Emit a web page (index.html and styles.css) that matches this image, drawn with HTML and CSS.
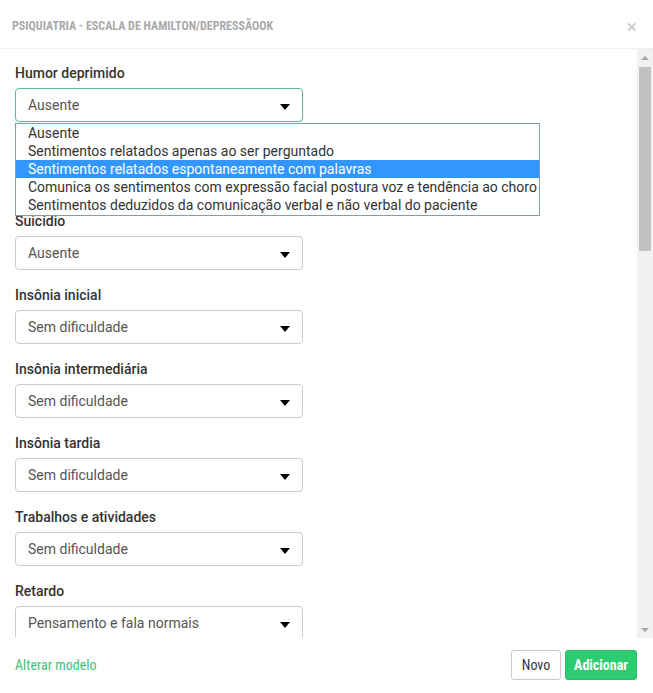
FILE: index.html
```html
<!DOCTYPE html>
<html lang="pt">
<head>
<meta charset="utf-8">
<link rel="stylesheet" href="styles.css">
</head>
<body>
<div class="modal">
  <div class="modal-header">
    <span class="title">PSIQUIATRIA - ESCALA DE HAMILTON/DEPRESSÃOOK</span>
    <span class="close">×</span>
  </div>
  <div class="modal-middle">
    <div class="modal-body">
      <div class="group">
        <div class="label">Humor deprimido</div>
        <div class="select focused"><span>Ausente</span><i class="caret"></i></div>
        <ul class="dropdown">
          <li>Ausente</li>
          <li>Sentimentos relatados apenas ao ser perguntado</li>
          <li class="active">Sentimentos relatados espontaneamente com palavras</li>
          <li>Comunica os sentimentos com expressão facial postura voz e tendência ao choro</li>
          <li>Sentimentos deduzidos da comunicação verbal e não verbal do paciente</li>
        </ul>
      </div>
      <div class="group covered">
        <div class="label">Sentimentos de culpa</div>
        <div class="select"><span>Ausente</span><i class="caret"></i></div>
      </div>
      <div class="group">
        <div class="label">Suicídio</div>
        <div class="select"><span>Ausente</span><i class="caret"></i></div>
      </div>
      <div class="group">
        <div class="label">Insônia inicial</div>
        <div class="select"><span>Sem dificuldade</span><i class="caret"></i></div>
      </div>
      <div class="group">
        <div class="label">Insônia intermediária</div>
        <div class="select"><span>Sem dificuldade</span><i class="caret"></i></div>
      </div>
      <div class="group">
        <div class="label">Insônia tardia</div>
        <div class="select"><span>Sem dificuldade</span><i class="caret"></i></div>
      </div>
      <div class="group">
        <div class="label">Trabalhos e atividades</div>
        <div class="select"><span>Sem dificuldade</span><i class="caret"></i></div>
      </div>
      <div class="group">
        <div class="label">Retardo</div>
        <div class="select"><span>Pensamento e fala normais</span><i class="caret"></i></div>
      </div>
    </div>
    <div class="scrollbar">
      <div class="sb-arrow up"></div>
      <div class="sb-track"><div class="sb-thumb"></div></div>
      <div class="sb-arrow down"></div>
    </div>
  </div>
  <div class="modal-footer">
    <a class="link">Alterar modelo</a>
    <div class="buttons">
      <button class="btn btn-default">Novo</button>
      <button class="btn btn-success">Adicionar</button>
    </div>
  </div>
</div>
</body>
</html>
```

FILE: styles.css
```css
* { box-sizing: border-box; }
html, body { margin: 0; padding: 0; background: #fff; }
body { font-family: Roboto, "Liberation Sans", sans-serif; color: #333; }

.modal { width: 653px; height: 693px; display: flex; flex-direction: column; background: #fff; }

.modal-header {
  height: 49px;
  display: flex;
  align-items: center;
  justify-content: space-between;
  padding: 4px 16px 0 12px;
  border-bottom: 1px dotted #e4e4e4;
}
.title { font-family: "Roboto Condensed", Roboto, sans-serif; font-size: 12px; font-weight: 700; color: #a9a9a9; letter-spacing: 0; }
.close { font-size: 19px; color: #c8c8c8; line-height: 1; margin-right: 0; }

.modal-middle { height: 589px; display: flex; }
.modal-body { flex: 1; overflow: hidden; padding: 14px 0 0 15px; }

.group { position: relative; margin-bottom: 15px; }
.covered { visibility: hidden; }
.label { font-size: 14px; line-height: 20px; font-weight: 500; color: #333; margin-bottom: 5px; }

.select {
  width: 288px;
  height: 34px;
  border: 1px solid #ccc;
  border-radius: 4px;
  display: flex;
  align-items: center;
  justify-content: space-between;
  padding: 0 12px 1px 12px;
  font-size: 14px;
  color: #555;
}
.select.focused { border-color: #5bbd8f; box-shadow: 0 0 1px rgba(91,189,143,0.4); }
.caret {
  width: 0; height: 0;
  border-left: 5px solid transparent;
  border-right: 5px solid transparent;
  border-top: 6px solid #000;
  margin-top: 4px;
}

.dropdown {
  position: absolute;
  left: 0;
  top: 60px;
  width: 525px;
  margin: 0;
  padding: 0 0 1px 0;
  list-style: none;
  background: #fff;
  border: 1px solid #7f9db9;
  font-size: 14px;
  color: #333;
  z-index: 5;
}
.dropdown li { height: 18px; line-height: 18px; padding-left: 12px; white-space: nowrap; }
.dropdown li.active { background: #3296fd; color: #fff; }

.scrollbar { width: 16px; display: flex; flex-direction: column; background: #f1f1f1; }
.sb-arrow { height: 17px; display: flex; align-items: center; justify-content: center; }
.sb-arrow.up::before {
  content: ""; width: 0; height: 0;
  border-left: 4px solid transparent; border-right: 4px solid transparent;
  border-bottom: 4px solid #a3a3a3;
}
.sb-arrow.down::before {
  content: ""; width: 0; height: 0;
  border-left: 4px solid transparent; border-right: 4px solid transparent;
  border-top: 4px solid #a3a3a3;
}
.sb-track { flex: 1; padding: 1px 2px 0 2px; }
.sb-thumb { height: 184px; background: #c1c1c1; }

.modal-footer {
  flex: 1;
  display: flex;
  align-items: center;
  justify-content: space-between;
  padding: 0 16px 2px 15px;
}
.link { font-family: "Roboto Condensed", Roboto, sans-serif; font-size: 14px; color: #3fbf79; }
.buttons { display: flex; gap: 4px; }
.btn {
  height: 30px;
  font-family: "Roboto Condensed", Roboto, sans-serif;
  font-size: 14px;
  border-radius: 3px;
  padding: 0;
  cursor: pointer;
}
.btn-default { background: #fff; border: 1px solid #ccc; color: #333; width: 50px; }
.btn-success { background: #2ecc71; border: 1px solid #29c068; color: #fff; font-weight: 700; width: 72px; }
```
